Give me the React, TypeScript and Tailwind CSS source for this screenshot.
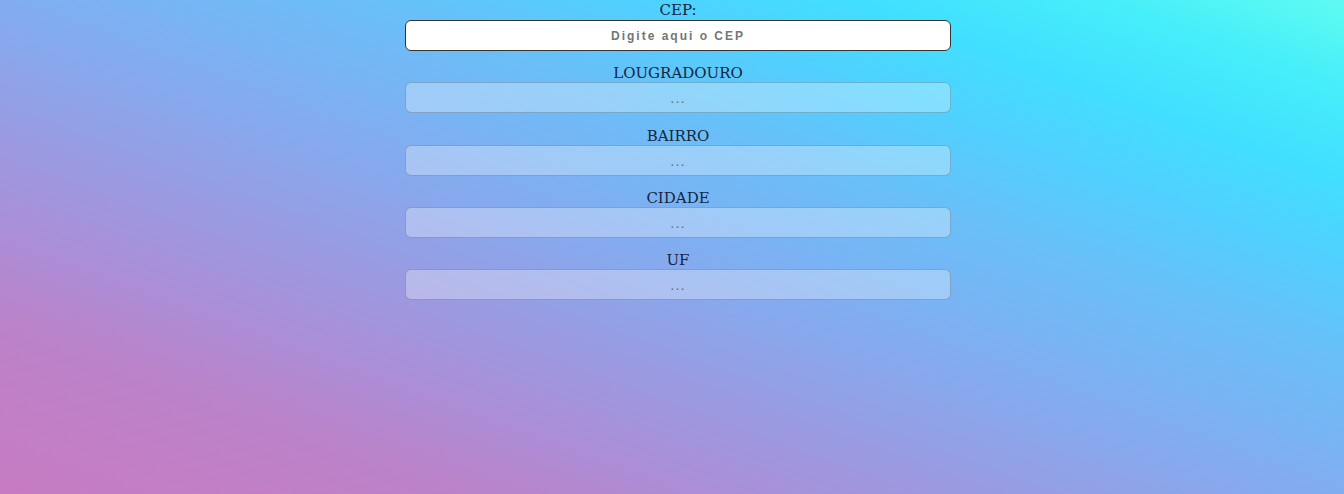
import React from "react";

const fields = ["LOUGRADOURO", "BAIRRO", "CIDADE", "UF"];

export default function App() {
  return (
    <div className="min-h-screen w-full bg-[linear-gradient(to_right_top,#c67bc2,#c27fc6,#ba83ca,#aa8fd8,#9a9ae1,#8aa7ec,#79b3f4,#69bff8,#52cffe,#41dfff,#46eefa,#5ffbf1)]">
      <div className="flex justify-center pl-[12px]">
        <form className="flex w-[546px] flex-col items-center">
          <label className="block h-[20px] pt-[1px] text-[15px] leading-[19px] text-[#17243d] [font-family:'DejaVu_Serif',serif]">
            CEP:
          </label>
          <input
            type="text"
            placeholder="Digite aqui o CEP"
            className="mb-[11.3px] h-[31px] w-full rounded-[6px] border border-[#333] bg-white text-center text-[12px] font-bold tracking-[2px] text-[#555] outline-none placeholder:text-[#757575] [font-family:'Liberation_Sans',Arial,sans-serif]"
          />
          {fields.map((f) => (
            <React.Fragment key={f}>
              <label className="block h-[20px] pt-[2px] text-[15px] leading-[18px] text-[#17243d] [font-family:'DejaVu_Serif',serif]">
                {f}
              </label>
              <input
                type="text"
                readOnly
                placeholder="..."
                className="mb-[11.3px] h-[31px] w-full rounded-[6px] border border-black/20 bg-white/30 text-center text-[15px] tracking-[1px] text-[#555] outline-none placeholder:text-[#707070] [font-family:'Liberation_Sans',Arial,sans-serif]"
              />
            </React.Fragment>
          ))}
        </form>
      </div>
    </div>
  );
}
